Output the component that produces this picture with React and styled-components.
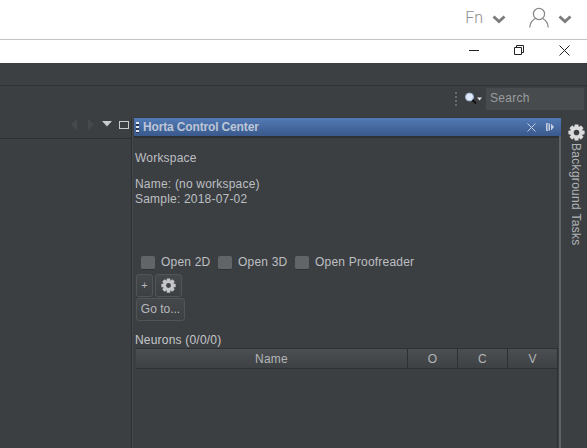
import React from 'react';
import styled, { createGlobalStyle } from 'styled-components';

const GlobalStyle = createGlobalStyle`
  html, body {
    margin: 0;
    padding: 0;
    background: #3c3f42;
    overflow: hidden;
  }
  body {
    font-family: "Liberation Sans", Arial, sans-serif;
  }
`;

const Page = styled.div`
  width: 587px;
  height: 448px;
  display: flex;
  flex-direction: column;
  overflow: hidden;
`;

const BrowserBar = styled.header`
  height: 40px;
  flex: none;
  box-sizing: border-box;
  background: #fff;
  border-bottom: 1px solid #c4c4c4;
  display: flex;
  align-items: center;
  justify-content: flex-end;
  padding: 0 15px 4px 0;
`;

const FnLabel = styled.span`
  font-family: Roboto, sans-serif;
  font-weight: 300;
  font-size: 16px;
  color: #8e8e8e;
  margin-right: 9px;
`;

const ChevronIcon = styled.svg`
  width: 14px;
  height: 9px;
  margin-top: 4px;
`;

const UserIcon = styled.svg`
  width: 20px;
  height: 21px;
  margin: 0 9px 0 23px;
`;

const WindowBar = styled.div`
  height: 23px;
  flex: none;
  background: #fff;
  display: flex;
  justify-content: flex-end;
  align-items: center;
  padding-bottom: 3px;
  box-sizing: border-box;
`;

const WindowButton = styled.div`
  width: ${(p) => p.$width || 45}px;
  height: 100%;
  display: flex;
  align-items: center;
  justify-content: center;
  svg { display: block; }
`;

const MenuBar = styled.div`
  height: 22px;
  flex: none;
  background: #3c4043;
  border-bottom: 1px solid #303336;
`;

const ToolBar = styled.div`
  height: 31px;
  flex: none;
  background: #3c3f42;
  display: flex;
  align-items: center;
  justify-content: flex-end;
  padding: 0 3px 5px 0;
  box-sizing: border-box;
`;

const Grip = styled.div`
  width: 2px;
  height: 15px;
  margin-right: 7px;
  background: repeating-linear-gradient(to bottom, #6a6d70 0 2px, transparent 2px 4px);
`;

const SearchBox = styled.div`
  width: 98px;
  height: 22px;
  margin-left: 4px;
  box-sizing: border-box;
  padding-left: 4px;
  background: #474b4d;
  color: #9a9d9f;
  font-size: 12px;
  line-height: 21px;
  letter-spacing: 0.3px;
`;

const Body = styled.div`
  flex: 1;
  display: flex;
  min-height: 0;
`;

const LeftPane = styled.div`
  width: 131px;
  flex: none;
  display: flex;
  flex-direction: column;
  border-right: 1px solid #2e3033;
  box-shadow: 1px 0 0 #45484b;
`;

const LeftTabs = styled.div`
  height: 22px;
  box-sizing: border-box;
  border-bottom: 1px solid #2e3033;
  display: flex;
  align-items: flex-start;
  justify-content: flex-end;
  padding: 2px 2px 0 0;
`;

const TabIcon = styled.svg`
  display: block;
  margin: ${(p) => p.$top || 0}px 0 0 ${(p) => p.$left || 0}px;
`;

const Center = styled.div`
  flex: 1;
  margin-left: 2px;
  display: flex;
  flex-direction: column;
  min-width: 0;
  border-right: 2px solid #5f6265;
`;

const TitleBar = styled.div`
  height: 19px;
  flex: none;
  box-sizing: border-box;
  background: linear-gradient(to bottom, #527ab5, #3a598c);
  border-top: 1px solid #35383b;
  display: flex;
  align-items: center;
  padding: 0 7px 0 2px;
  color: #bcc6d6;
  font-weight: bold;
  font-size: 12px;
  letter-spacing: -0.15px;
  margin-right: -2px;
`;

const TitleGrip = styled.span`
  width: 3px;
  height: 11px;
  margin-right: 4px;
  background: repeating-linear-gradient(to bottom, #e4e8f0 0 2px, #26344e 2px 4px);
`;

const TitleText = styled.span`
  flex: 1;
`;

const TitleIcon = styled.svg`
  display: block;
  margin-left: 10px;
`;

const Panel = styled.div`
  flex: 1;
  min-height: 0;
  display: flex;
  flex-direction: column;
  border-top: 2px solid #2e3033;
  padding: 13px 1px 0 1px;
  color: #bcbfc2;
  font-size: 12px;
  line-height: 15px;
  letter-spacing: 0.2px;
`;

const Line = styled.div`
  margin-top: ${(p) => p.$gap || 0}px;
  white-space: nowrap;
`;

const CheckRow = styled.div`
  display: flex;
  align-items: center;
  margin: 48px 0 0 6px;
  height: 15px;
`;

const CheckOption = styled.label`
  display: flex;
  align-items: center;
  flex: ${(p) => (p.$grow ? 1 : '0 0 77px')};
`;

const CheckBox = styled.span`
  width: 14px;
  height: 14px;
  box-sizing: border-box;
  border-radius: 2px;
  background: #626568;
  border-bottom: 1px solid #2f3234;
  margin-right: 6px;
`;

const ButtonRow = styled.div`
  display: flex;
  margin: ${(p) => p.$gap}px 0 0 1px;
  gap: 2px;
`;

const Button = styled.div`
  width: ${(p) => p.$width}px;
  height: 23px;
  box-sizing: border-box;
  display: flex;
  align-items: center;
  justify-content: center;
  background: linear-gradient(to bottom, #45484b, #3d4043);
  border: 1px solid #525558;
  border-radius: 3px;
  color: #b6b9bc;
  font-size: ${(p) => p.$size || 12}px;
  letter-spacing: 0;
`;

const Caption = styled.div`
  margin-top: 12px;
  color: #c4c7ca;
`;

const TableArea = styled.div`
  flex: 1;
  margin: 0 0 0 1px;
  border-right: 1px solid #2e3033;
`;

const NeuronTable = styled.div`
  display: flex;
  height: 21px;
  border-top: 1px solid #2e3033;
  border-bottom: 1px solid #2e3033;
  background: linear-gradient(to bottom, #4c4f52, #3e4144);
  box-sizing: border-box;
`;

const HeaderCell = styled.div`
  flex: ${(p) => (p.$flag ? '0 0 50px' : 1)};
  box-sizing: border-box;
  border-left: ${(p) => (p.$flag ? '1px solid #2e3033' : 'none')};
  text-align: center;
  line-height: 20px;
  color: #b3b6b9;
`;

const SideStrip = styled.aside`
  width: 26px;
  flex: none;
  box-sizing: border-box;
  display: flex;
  flex-direction: column;
  align-items: center;
  padding: 7px 0 0 5px;
`;

const SideLabel = styled.div`
  writing-mode: vertical-rl;
  margin: 2px 0 0 -2px;
  color: #b0b3b6;
  font-size: 12px;
  letter-spacing: 0.3px;
  white-space: nowrap;
`;

function Chevron() {
  return (
    <ChevronIcon viewBox="0 0 14 9">
      <path d="M1.5 1.5 L7 6.5 L12.5 1.5" fill="none" stroke="#7d7d7d" strokeWidth="3" />
    </ChevronIcon>
  );
}

function Gear({ size = 18, color = '#d6d6d6' }) {
  const teeth = [0, 45, 90, 135, 180, 225, 270, 315];
  return (
    <svg width={size} height={size} viewBox="0 0 20 20" style={{ display: 'block' }}>
      {teeth.map((a) => (
        <rect key={a} x="7.6" y="0.5" width="4.8" height="5" rx="0.8" fill={color} transform={`rotate(${a} 10 10)`} />
      ))}
      <circle cx="10" cy="10" r="5.3" fill="none" stroke={color} strokeWidth="4" />
    </svg>
  );
}

export default function App() {
  return (
    <Page>
      <GlobalStyle />
      <BrowserBar>
        <FnLabel>Fn</FnLabel>
        <Chevron />
        <UserIcon viewBox="0 0 20 21">
          <circle cx="10" cy="7" r="5.6" fill="none" stroke="#8a8a8a" strokeWidth="1.3" />
          <path d="M0.8 20.5 C1 16 3.8 12.8 6.3 11.5 M19.2 20.5 C19 16 16.2 12.8 13.7 11.5" fill="none" stroke="#8a8a8a" strokeWidth="1.3" />
        </UserIcon>
        <Chevron />
      </BrowserBar>

      <WindowBar>
        <WindowButton>
          <svg width="10" height="10"><path d="M0 5.5 H10" stroke="#222" /></svg>
        </WindowButton>
        <WindowButton $width={46}>
          <svg width="10" height="10" viewBox="0 0 10 10">
            <path d="M0.5 2.5 H7.5 V9.5 H0.5 Z M2.5 2.5 V0.5 H9.5 V7.5 H7.5" fill="none" stroke="#222" />
          </svg>
        </WindowButton>
        <WindowButton>
          <svg width="11" height="11"><path d="M0.5 0.5 L10.5 10.5 M10.5 0.5 L0.5 10.5" stroke="#222" /></svg>
        </WindowButton>
      </WindowBar>

      <MenuBar />

      <ToolBar>
        <Grip />
        <svg width="18" height="16" viewBox="0 0 18 16">
          <circle cx="5.5" cy="6" r="4" fill="#dfe9f7" stroke="#9bb4d6" />
          <path d="M8.5 9 L12 12.5" stroke="#111" strokeWidth="2" />
          <path d="M13 6.5 H18 L15.5 9.5 Z" fill="#e6e6e6" />
        </svg>
        <SearchBox>Search</SearchBox>
      </ToolBar>

      <Body>
        <LeftPane>
          <LeftTabs>
            <TabIcon width="6" height="11"><path d="M6 0 V11 L0 5.5 Z" fill="#47494c" /></TabIcon>
            <TabIcon width="6" height="11" $left={11}><path d="M0 0 V11 L6 5.5 Z" fill="#47494c" /></TabIcon>
            <TabIcon width="10" height="6" $left={8} $top={2}><path d="M0 0 H10 L5 5.5 Z" fill="#c8cacc" /></TabIcon>
            <TabIcon width="10" height="8" $left={7} $top={2}><rect x="0.5" y="0.5" width="9" height="7" fill="none" stroke="#c8cacc" /></TabIcon>
          </LeftTabs>
        </LeftPane>

        <Center>
          <TitleBar>
            <TitleGrip />
            <TitleText>Horta Control Center</TitleText>
            <TitleIcon width="9" height="9" viewBox="0 0 9 9">
              <path d="M0.5 0.5 L8.5 8.5 M8.5 0.5 L0.5 8.5" stroke="#c6d0e2" />
            </TitleIcon>
            <TitleIcon width="8" height="8" viewBox="0 0 8 8">
              <path d="M0.5 0.5 H2 V7.5 H0.5 Z M3.5 0.5 V7.5" fill="none" stroke="#c6d0e2" />
              <path d="M5 0.5 L8 4 L5 7.5 Z" fill="#c6d0e2" />
            </TitleIcon>
          </TitleBar>
          <Panel>
            <Line>Workspace</Line>
            <Line $gap={11}>Name: (no workspace)</Line>
            <Line>Sample: 2018-07-02</Line>
            <CheckRow>
              <CheckOption><CheckBox />Open 2D</CheckOption>
              <CheckOption><CheckBox />Open 3D</CheckOption>
              <CheckOption $grow><CheckBox />Open Proofreader</CheckOption>
            </CheckRow>
            <ButtonRow $gap={4}>
              <Button $width={17} $size={11}>+</Button>
              <Button $width={27}><Gear size={15} color="#c4c6c8" /></Button>
            </ButtonRow>
            <ButtonRow $gap={1}>
              <Button $width={49}>Go to...</Button>
            </ButtonRow>
            <Caption>Neurons (0/0/0)</Caption>
            <TableArea>
              <NeuronTable>
                <HeaderCell>Name</HeaderCell>
                <HeaderCell $flag>O</HeaderCell>
                <HeaderCell $flag>C</HeaderCell>
                <HeaderCell $flag>V</HeaderCell>
              </NeuronTable>
            </TableArea>
          </Panel>
        </Center>

        <SideStrip>
          <Gear size={17} color="#dcdcdc" />
          <SideLabel>Background Tasks</SideLabel>
        </SideStrip>
      </Body>
    </Page>
  );
}
